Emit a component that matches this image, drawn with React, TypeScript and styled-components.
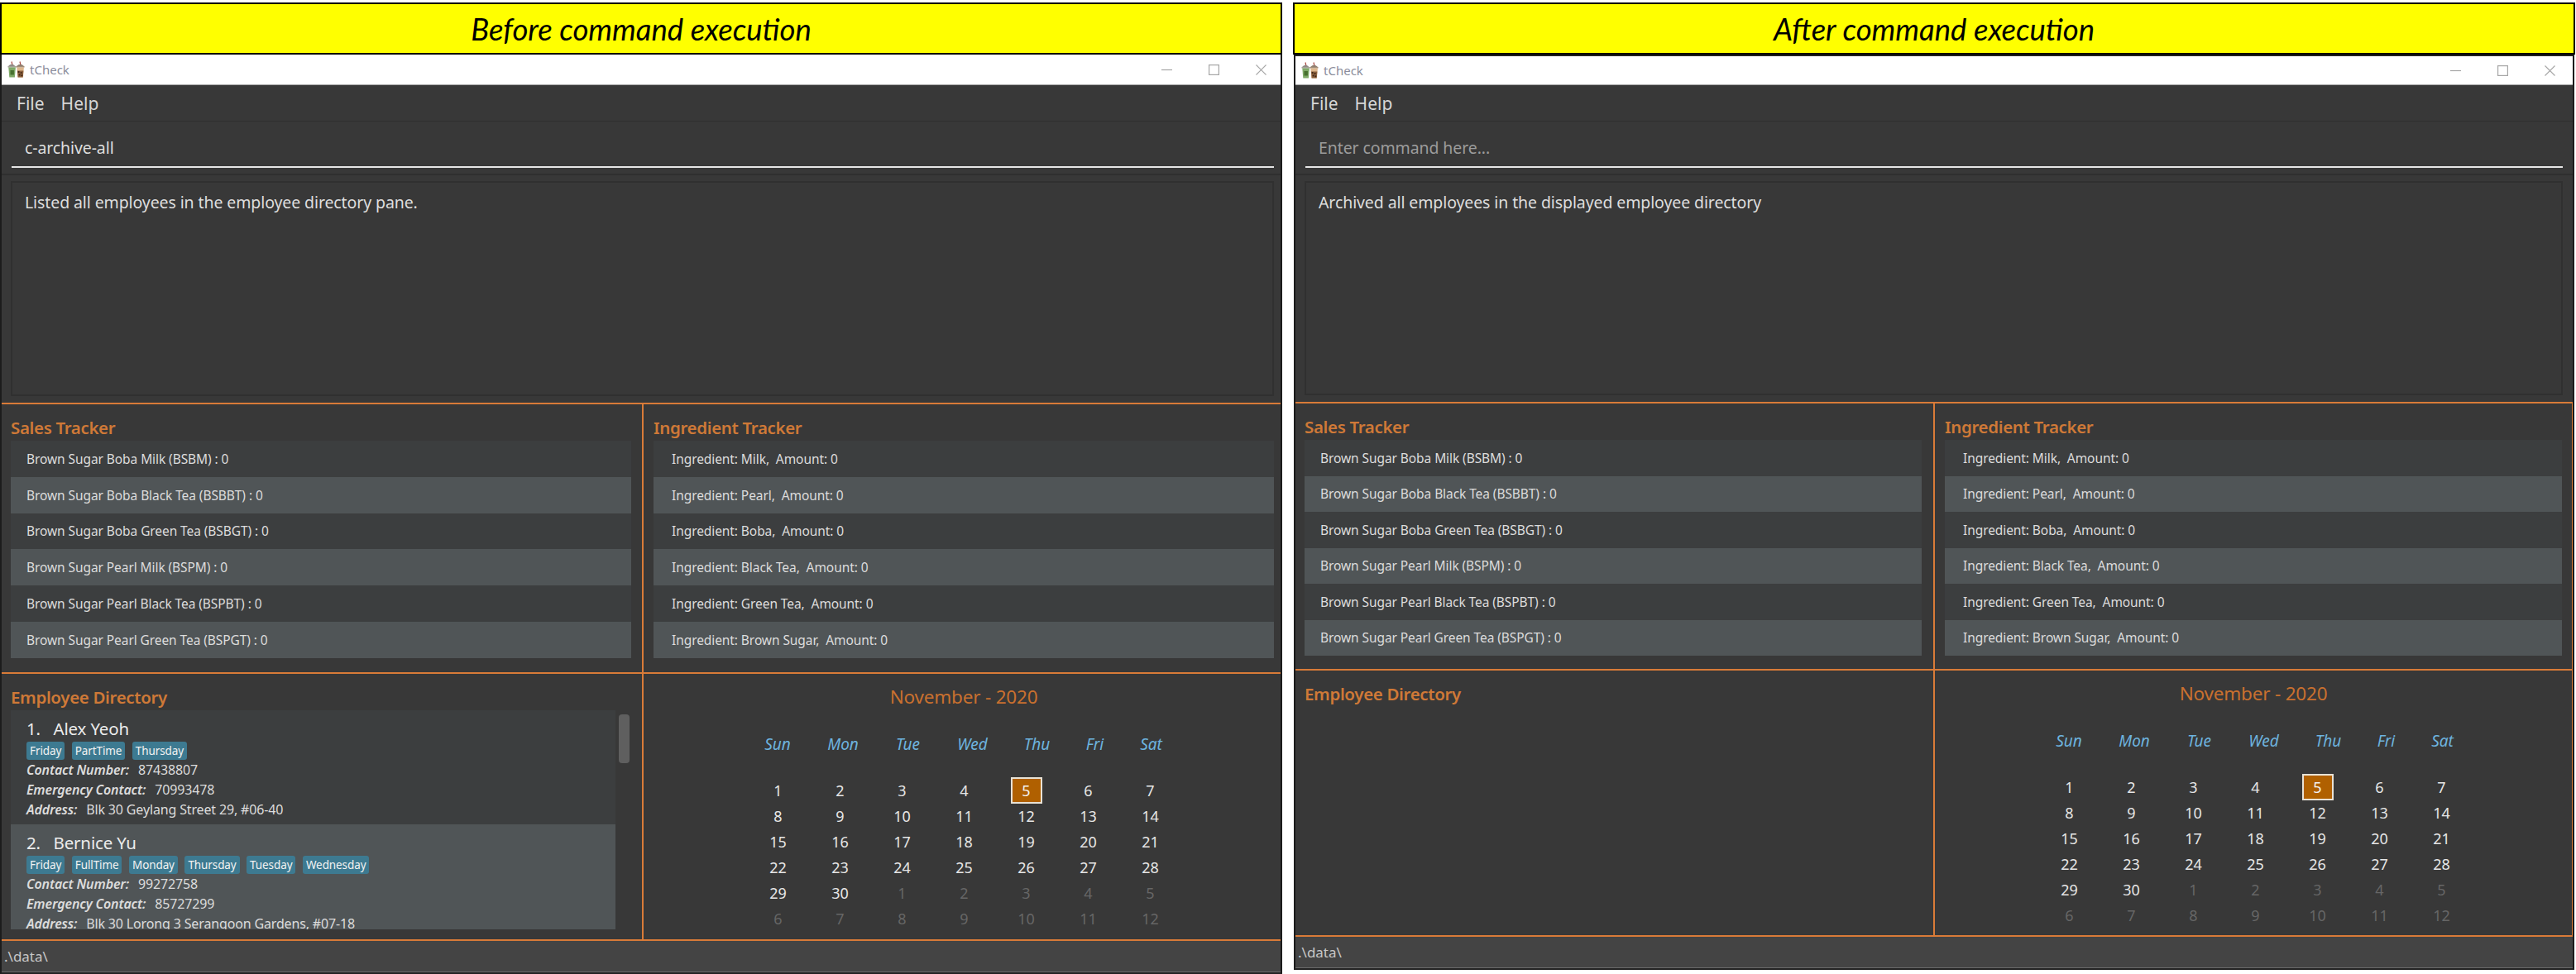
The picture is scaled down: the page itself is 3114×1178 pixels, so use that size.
import React from "react";
import styled, { createGlobalStyle } from "styled-components";

const UI = `"Noto Sans", "Open Sans", sans-serif`;
const ORANGE = "#d97b38";

const Global = createGlobalStyle`
  html, body { margin: 0; padding: 0; background: #fff; }
  * { box-sizing: border-box; }
`;

const Page = styled.div`
  width: 3114px;
  height: 1178px;
  padding-top: 3px;
  display: flex;
  gap: 13px;
  overflow: hidden;
  background: #fff;
  font-family: ${UI};
`;
const Side = styled.section`
  width: 1550px;
  display: flex;
  flex-direction: column;
`;
const Banner = styled.h2`
  margin: 0;
  height: 63px;
  background: #ffff00;
  border: 2.5px solid #000;
  display: flex;
  align-items: center;
  justify-content: center;
  font: italic 400 36.5px "Lato", sans-serif;
  color: #000;
`;
const Window = styled.div<{ $after?: boolean }>`
  flex: none;
  height: ${(p) => (p.$after ? 1107 : 1112)}px;
  margin: 0 ${(p) => (p.$after ? 1 : 0)}px;
  display: flex;
  flex-direction: column;
  background: #383838;
  border-left: 2px solid #1c1c1c;
  border-right: 2px solid #1c1c1c;
  border-top: ${(p) => (p.$after ? "2px solid #222" : "0")};
  border-bottom: 2px solid #222;
`;
const TitleBar = styled.div<{ $after?: boolean }>`
  flex: none;
  height: ${(p) => (p.$after ? 35 : 37)}px;
  background: #fff;
  border-bottom: 1px solid #a8a8a8;
  display: flex;
  align-items: center;
  padding-left: 7px;
  color: #8b8d9b;
  font-size: 15px;
`;
const AppName = styled.span`
  margin-left: 6px;
  flex: 1;
`;
const Controls = styled.div<{ $after?: boolean }>`
  display: flex;
  gap: 44px;
  padding-right: ${(p) => (p.$after ? 21 : 17)}px;
  align-items: center;
`;
const Menu = styled.nav`
  flex: none;
  height: 44px;
  display: flex;
  align-items: center;
  gap: 20px;
  padding-left: 18px;
  color: #d6d6d6;
  font-size: 21px;
  border-bottom: 1px solid #2e2e2e;
`;
const CommandBox = styled.div<{ $after?: boolean }>`
  flex: none;
  height: 65px;
  padding: 0 ${(p) => (p.$after ? 12 : 8)}px 0 12px;
  border-bottom: 2px solid #2f2f2f;
`;
const CommandText = styled.div<{ $placeholder?: boolean }>`
  height: 56px;
  padding: 8px 0 0 16px;
  display: flex;
  align-items: center;
  border-bottom: 2px solid #e6e6e6;
  color: ${(p) => (p.$placeholder ? "#9c9c9c" : "#dedede")};
  font-size: 19.5px;
  letter-spacing: -0.1px;
`;
const ResultWrap = styled.div<{ $after?: boolean }>`
  flex: none;
  height: ${(p) => (p.$after ? 274 : 275)}px;
  padding: 7px ${(p) => (p.$after ? 12 : 8)}px 8px 11px;
`;
const ResultBox = styled.div`
  height: 100%;
  border: 2px solid #303030;
  padding: 9px 15px;
  color: #dedede;
  font-size: 19.5px;
  line-height: 30px;
  letter-spacing: -0.1px;
`;
const Grid = styled.div<{ $after?: boolean }>`
  display: grid;
  grid-template-columns: ${(p) => (p.$after ? 773 : 776)}px 1fr;
  flex: none;
  border-top: 2px solid ${ORANGE};
  border-right: ${(p) => (p.$after ? `1.5px solid ${ORANGE}` : "0")};
`;
const TrackerGrid = styled(Grid)<{ $after?: boolean }>`
  height: ${(p) => (p.$after ? 323 : 326)}px;
`;
const BottomGrid = styled(Grid)<{ $after?: boolean }>`
  height: ${(p) => (p.$after ? 324 : 325)}px;
  border-bottom: 2px solid ${ORANGE};
`;
const SidePane = styled.div<{ $after?: boolean }>`
  min-width: 0;
  padding: 13px ${(p) => (p.$after ? 14 : 13)}px 0 11px;
  border-right: 2px solid ${ORANGE};
`;
const MainPane = styled.div<{ $after?: boolean }>`
  min-width: 0;
  padding: 13px ${(p) => (p.$after ? 12 : 8)}px 0 12px;
`;
const PaneTitle = styled.h3`
  margin: 0;
  height: 30px;
  line-height: 30px;
  font-size: 20.5px;
  font-weight: 600;
  letter-spacing: -0.35px;
  color: #cf7937;
`;
const List = styled.div`
  margin-top: 1px;
`;
const Row = styled.div<{ $alt?: boolean; $after?: boolean }>`
  height: ${(p) => (p.$after ? 43.5 : 43.8)}px;
  display: flex;
  align-items: center;
  padding-left: 19px;
  font-size: 15.5px;
  letter-spacing: -0.08px;
  color: #dcdcdc;
  white-space: pre;
  background: ${(p) => (p.$alt ? "#505557" : "#3c3e3f")};
`;
const IngredientRow = styled(Row)`
  padding-left: 22px;
`;
const DirectoryBody = styled.div`
  display: flex;
  height: 265px;
  margin-top: 1px;
`;
const Employees = styled.div`
  width: 731px;
  overflow: hidden;
`;
const Employee = styled.article<{ $alt?: boolean }>`
  padding: 7px 19px 6px;
  height: 138px;
  color: #dcdcdc;
  background: ${(p) => (p.$alt ? "#505557" : "#3c3e3f")};
`;
const Name = styled.div`
  height: 31px;
  line-height: 31px;
  font-size: 20.5px;
  letter-spacing: -0.15px;
  color: #ececec;
  white-space: pre;
`;
const Tags = styled.div`
  display: flex;
  gap: 8.5px;
`;
const Tag = styled.span`
  height: 22px;
  padding: 0 4px;
  display: flex;
  align-items: center;
  border-radius: 3px;
  background: #3d7a91;
  color: #f2f2f2;
  font-size: 13.5px;
  letter-spacing: -0.1px;
`;
const Info = styled.div`
  height: 24px;
  line-height: 24px;
  font-size: 16px;
  letter-spacing: -0.15px;
  white-space: nowrap;
`;
const Label = styled.span`
  font-style: italic;
  font-weight: 600;
  margin-right: 11px;
`;
const ScrollTrack = styled.div`
  width: 19px;
  padding: 5px 2px 0 4px;
`;
const ScrollThumb = styled.div`
  width: 13px;
  height: 59px;
  border-radius: 4px;
  background: #5f5f5f;
`;
const CalendarPane = styled.div`
  padding-top: 13px;
  display: flex;
  flex-direction: column;
  align-items: center;
`;
const MonthTitle = styled.div<{ $after?: boolean }>`
  height: 30px;
  line-height: 30px;
  margin-left: ${(p) => (p.$after ? 0 : 4)}px;
  font-size: 22.5px;
  letter-spacing: -0.2px;
  color: #c9702f;
`;
const DayNames = styled.div`
  margin: 28px 0 0 3px;
  display: grid;
  grid-template-columns: 79px 79px 78px 78px 78px 62px 74px;
`;
const DayName = styled.div`
  text-align: center;
  height: 28px;
  line-height: 28px;
  font-size: 19px;
  font-style: italic;
  color: #6db3df;
`;
const Days = styled.div`
  margin: 26px 0 0 5px;
  display: grid;
  grid-template-columns: repeat(7, 75px);
  grid-auto-rows: 31.1px;
`;
const Day = styled.div<{ $muted?: boolean }>`
  display: flex;
  align-items: center;
  justify-content: center;
  font-size: 18px;
  color: ${(p) => (p.$muted ? "#666" : "#e6e6e6")};
`;
const Today = styled.span`
  width: 38px;
  height: 32px;
  display: flex;
  align-items: center;
  justify-content: center;
  background: #b06000;
  border: 2px solid #e8e2d6;
  color: #f2f2f2;
`;
const StatusBar = styled.footer`
  flex: 1;
  min-height: 0;
  background: #444;
  padding-left: 3px;
  display: flex;
  align-items: center;
  color: #c8c8c8;
  font-size: 17px;
  border-bottom: 1px solid #6c6c6c;
`;

const Logo = () => (
  <svg width="21" height="20" viewBox="0 0 21 20">
    <path d="M5 0.5 L6 5M15 0.5 L16 5" stroke="#a8463e" strokeWidth="1.2" fill="none" />
    <path d="M1 6 Q5 1.5 9.5 6Z" fill="#8f8a84" />
    <path d="M11 6 Q15.5 1.5 20 6Z" fill="#8f7f70" />
    <rect x="0.5" y="6" width="10" height="1.6" fill="#a5a199" />
    <rect x="10.5" y="6" width="10" height="1.6" fill="#a18c78" />
    <path d="M1.3 7.6h8.6l-1 12H2.3z" fill="#7fa968" />
    <rect x="3.5" y="11" width="4.4" height="5.5" fill="#47702f" />
    <path d="M11.3 7.6h8.6l-1 12h-6.6z" fill="#dcb68c" />
    <path d="M12 11.5h7.4l-.7 8h-6z" fill="#8a5f3c" />
    <g fill="#3c2415">
      <circle cx="13.6" cy="13" r="1" />
      <circle cx="16.6" cy="14" r="1" />
      <circle cx="14.6" cy="16.5" r="1" />
      <circle cx="17.4" cy="17.3" r="1" />
    </g>
  </svg>
);

const WindowControls = ({ after }: { after?: boolean }) => (
  <Controls $after={after}>
    <svg width="13" height="13" viewBox="0 0 13 13">
      <path d="M0 6.5h13" stroke="#a6a6a6" strokeWidth="1.2" />
    </svg>
    <svg width="13" height="13" viewBox="0 0 13 13">
      <rect x="0.6" y="0.6" width="11.8" height="11.8" fill="none" stroke="#a6a6a6" strokeWidth="1.2" />
    </svg>
    <svg width="13" height="13" viewBox="0 0 13 13">
      <path d="M0.5 0.5l12 12M12.5 0.5l-12 12" stroke="#a6a6a6" strokeWidth="1.1" />
    </svg>
  </Controls>
);

const SALES = [
  "Brown Sugar Boba Milk (BSBM) : 0",
  "Brown Sugar Boba Black Tea (BSBBT) : 0",
  "Brown Sugar Boba Green Tea (BSBGT) : 0",
  "Brown Sugar Pearl Milk (BSPM) : 0",
  "Brown Sugar Pearl Black Tea (BSPBT) : 0",
  "Brown Sugar Pearl Green Tea (BSPGT) : 0",
];
const INGREDIENTS = ["Milk", "Pearl", "Boba", "Black Tea", "Green Tea", "Brown Sugar"];
const EMPLOYEES = [
  {
    name: "1.   Alex Yeoh",
    tags: ["Friday", "PartTime", "Thursday"],
    phone: "87438807",
    emergency: "70993478",
    address: "Blk 30 Geylang Street 29, #06-40",
  },
  {
    name: "2.   Bernice Yu",
    tags: ["Friday", "FullTime", "Monday", "Thursday", "Tuesday", "Wednesday"],
    phone: "99272758",
    emergency: "85727299",
    address: "Blk 30 Lorong 3 Serangoon Gardens, #07-18",
  },
];
const WEEK = ["Sun", "Mon", "Tue", "Wed", "Thu", "Fri", "Sat"];
const CELLS: { n: number; muted?: boolean; today?: boolean }[] = [
  ...Array.from({ length: 30 }, (_, i) => ({ n: i + 1, today: i === 4 })),
  ...Array.from({ length: 12 }, (_, i) => ({ n: i + 1, muted: true })),
];

const Calendar = ({ after }: { after?: boolean }) => (
  <CalendarPane>
    <MonthTitle $after={after}>November - 2020</MonthTitle>
    <DayNames>
      {WEEK.map((d) => (
        <DayName key={d}>{d}</DayName>
      ))}
    </DayNames>
    <Days>
      {CELLS.map((c, i) => (
        <Day key={i} $muted={c.muted}>
          {c.today ? <Today>{c.n}</Today> : c.n}
        </Day>
      ))}
    </Days>
  </CalendarPane>
);

const TCheck = ({ after }: { after?: boolean }) => (
  <Window $after={after}>
    <TitleBar $after={after}>
      <Logo />
      <AppName>tCheck</AppName>
      <WindowControls after={after} />
    </TitleBar>
    <Menu>
      <span>File</span>
      <span>Help</span>
    </Menu>
    <CommandBox $after={after}>
      <CommandText $placeholder={after}>{after ? "Enter command here..." : "c-archive-all"}</CommandText>
    </CommandBox>
    <ResultWrap $after={after}>
      <ResultBox>
        {after ? "Archived all employees in the displayed employee directory" : "Listed all employees in the employee directory pane."}
      </ResultBox>
    </ResultWrap>
    <TrackerGrid $after={after}>
      <SidePane $after={after}>
        <PaneTitle>Sales Tracker</PaneTitle>
        <List>
          {SALES.map((s, i) => (
            <Row key={s} $alt={i % 2 === 1} $after={after}>
              {s}
            </Row>
          ))}
        </List>
      </SidePane>
      <MainPane $after={after}>
        <PaneTitle>Ingredient Tracker</PaneTitle>
        <List>
          {INGREDIENTS.map((s, i) => (
            <IngredientRow key={s} $alt={i % 2 === 1} $after={after}>
              {`Ingredient: ${s},  Amount: 0`}
            </IngredientRow>
          ))}
        </List>
      </MainPane>
    </TrackerGrid>
    <BottomGrid $after={after}>
      <SidePane $after={after}>
        <PaneTitle>Employee Directory</PaneTitle>
        {!after && (
          <DirectoryBody>
            <Employees>
              {EMPLOYEES.map((e, i) => (
                <Employee key={e.name} $alt={i === 1}>
                  <Name>{e.name}</Name>
                  <Tags>
                    {e.tags.map((t) => (
                      <Tag key={t}>{t}</Tag>
                    ))}
                  </Tags>
                  <Info>
                    <Label>Contact Number:</Label>
                    {e.phone}
                  </Info>
                  <Info>
                    <Label>Emergency Contact:</Label>
                    {e.emergency}
                  </Info>
                  <Info>
                    <Label>Address:</Label>
                    {e.address}
                  </Info>
                </Employee>
              ))}
            </Employees>
            <ScrollTrack>
              <ScrollThumb />
            </ScrollTrack>
          </DirectoryBody>
        )}
      </SidePane>
      <Calendar after={after} />
    </BottomGrid>
    <StatusBar>.\data\</StatusBar>
  </Window>
);

export default function App() {
  return (
    <>
      <Global />
      <Page>
        <Side>
          <Banner>Before command execution</Banner>
          <TCheck />
        </Side>
        <Side>
          <Banner>After command execution</Banner>
          <TCheck after />
        </Side>
      </Page>
    </>
  );
}
